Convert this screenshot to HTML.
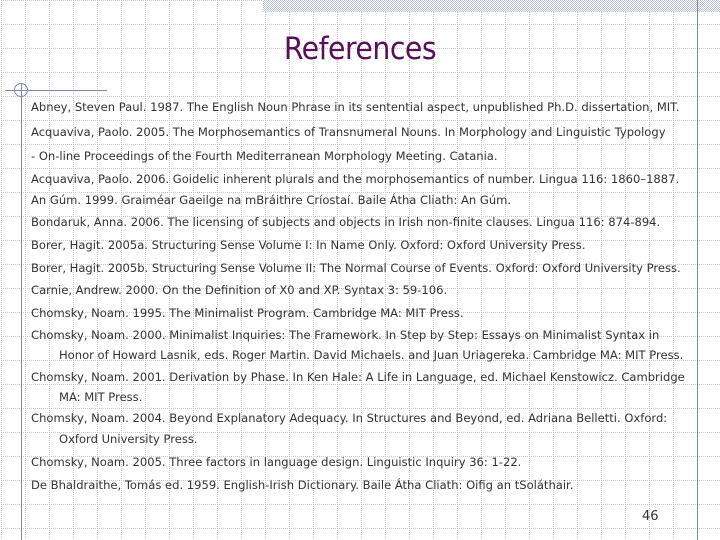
<!DOCTYPE html>
<html><head><meta charset="utf-8"><style>
html,body{margin:0;padding:0}
body{width:720px;height:540px;position:relative;overflow:hidden;background:#fff}
.gv{position:absolute;left:0;top:0;width:720px;height:540px}
.t{position:absolute;font-family:"DejaVu Sans","Liberation Sans",sans-serif;font-size:11.55px;color:#333;white-space:nowrap;line-height:14px}
h1{position:absolute;margin:0;left:0;width:720px;top:31px;text-align:center;font-family:"DejaVu Sans Condensed","DejaVu Sans",sans-serif;font-weight:normal;font-size:31.5px;color:#5a0e5a;letter-spacing:-0.5px}
</style></head><body>
<svg class="gv" width="720" height="540">
<defs><pattern id="g" width="24" height="24" patternUnits="userSpaceOnUse" x="1" y="0">
<line x1="0.5" y1="0" x2="0.5" y2="24" stroke="#c8c8c8" stroke-dasharray="1,1"/>
<line x1="0" y1="0.5" x2="24" y2="0.5" stroke="#c8c8c8" stroke-dasharray="1,1"/>
</pattern>
<pattern id="c" width="2" height="2" patternUnits="userSpaceOnUse"><rect width="1" height="1" fill="#b7c3dc"/><rect x="1" y="1" width="1" height="1" fill="#b7c3dc"/></pattern></defs>
<rect width="720" height="540" fill="url(#g)"/>
<rect x="263" y="0" width="457" height="12" fill="#fff"/>
<rect x="263" y="0" width="457" height="12" fill="url(#c)"/>
<line x1="697.5" y1="0" x2="697.5" y2="540" stroke="#7c88b0" stroke-width="1"/>
<line x1="5" y1="90.5" x2="107" y2="90.5" stroke="#7c88b0"/>
<line x1="21.5" y1="83" x2="21.5" y2="540" stroke="#7c88b0"/>
<circle cx="21" cy="90" r="6.5" fill="none" stroke="#7c88b0"/>
</svg>
<h1>References</h1>
<div class="t" style="left:31px;top:100px">Abney, Steven Paul. 1987. The English Noun Phrase in its sentential aspect, unpublished Ph.D. dissertation, MIT.</div>
<div class="t" style="left:31px;top:125px">Acquaviva, Paolo. 2005. The Morphosemantics of Transnumeral Nouns. In Morphology and Linguistic Typology</div>
<div class="t" style="left:31px;top:149px">- On-line Proceedings of the Fourth Mediterranean Morphology Meeting. Catania.</div>
<div class="t" style="left:31px;top:172px">Acquaviva, Paolo. 2006. Goidelic inherent plurals and the morphosemantics of number. Lingua 116: 1860–1887.</div>
<div class="t" style="left:31px;top:193px">An Gúm. 1999. Graiméar Gaeilge na mBráithre Críostaí. Baile Átha Cliath: An Gúm.</div>
<div class="t" style="left:31px;top:215px">Bondaruk, Anna. 2006. The licensing of subjects and objects in Irish non-finite clauses. Lingua 116: 874-894.</div>
<div class="t" style="left:31px;top:238px">Borer, Hagit. 2005a. Structuring Sense Volume I: In Name Only. Oxford: Oxford University Press.</div>
<div class="t" style="left:31px;top:261px">Borer, Hagit. 2005b. Structuring Sense Volume II: The Normal Course of Events. Oxford: Oxford University Press.</div>
<div class="t" style="left:31px;top:283px">Carnie, Andrew. 2000. On the Definition of X0 and XP. Syntax 3: 59-106.</div>
<div class="t" style="left:31px;top:306px">Chomsky, Noam. 1995. The Minimalist Program. Cambridge MA: MIT Press.</div>
<div class="t" style="left:31px;top:328px">Chomsky, Noam. 2000. Minimalist Inquiries: The Framework. In Step by Step: Essays on Minimalist Syntax in</div>
<div class="t" style="left:59px;top:348px">Honor of Howard Lasnik, eds. Roger Martin. David Michaels. and Juan Uriagereka. Cambridge MA: MIT Press.</div>
<div class="t" style="left:31px;top:370px">Chomsky, Noam. 2001. Derivation by Phase. In Ken Hale: A Life in Language, ed. Michael Kenstowicz. Cambridge</div>
<div class="t" style="left:59px;top:390px">MA: MIT Press.</div>
<div class="t" style="left:31px;top:411px">Chomsky, Noam. 2004. Beyond Explanatory Adequacy. In Structures and Beyond, ed. Adriana Belletti. Oxford:</div>
<div class="t" style="left:59px;top:432px">Oxford University Press.</div>
<div class="t" style="left:31px;top:455px">Chomsky, Noam. 2005. Three factors in language design. Linguistic Inquiry 36: 1-22.</div>
<div class="t" style="left:31px;top:478px">De Bhaldraithe, Tomás ed. 1959. English-Irish Dictionary. Baile Átha Cliath: Oifig an tSoláthair.</div>
<div class="t" style="left:642px;top:510px;font-size:13px">46</div>
</body></html>
